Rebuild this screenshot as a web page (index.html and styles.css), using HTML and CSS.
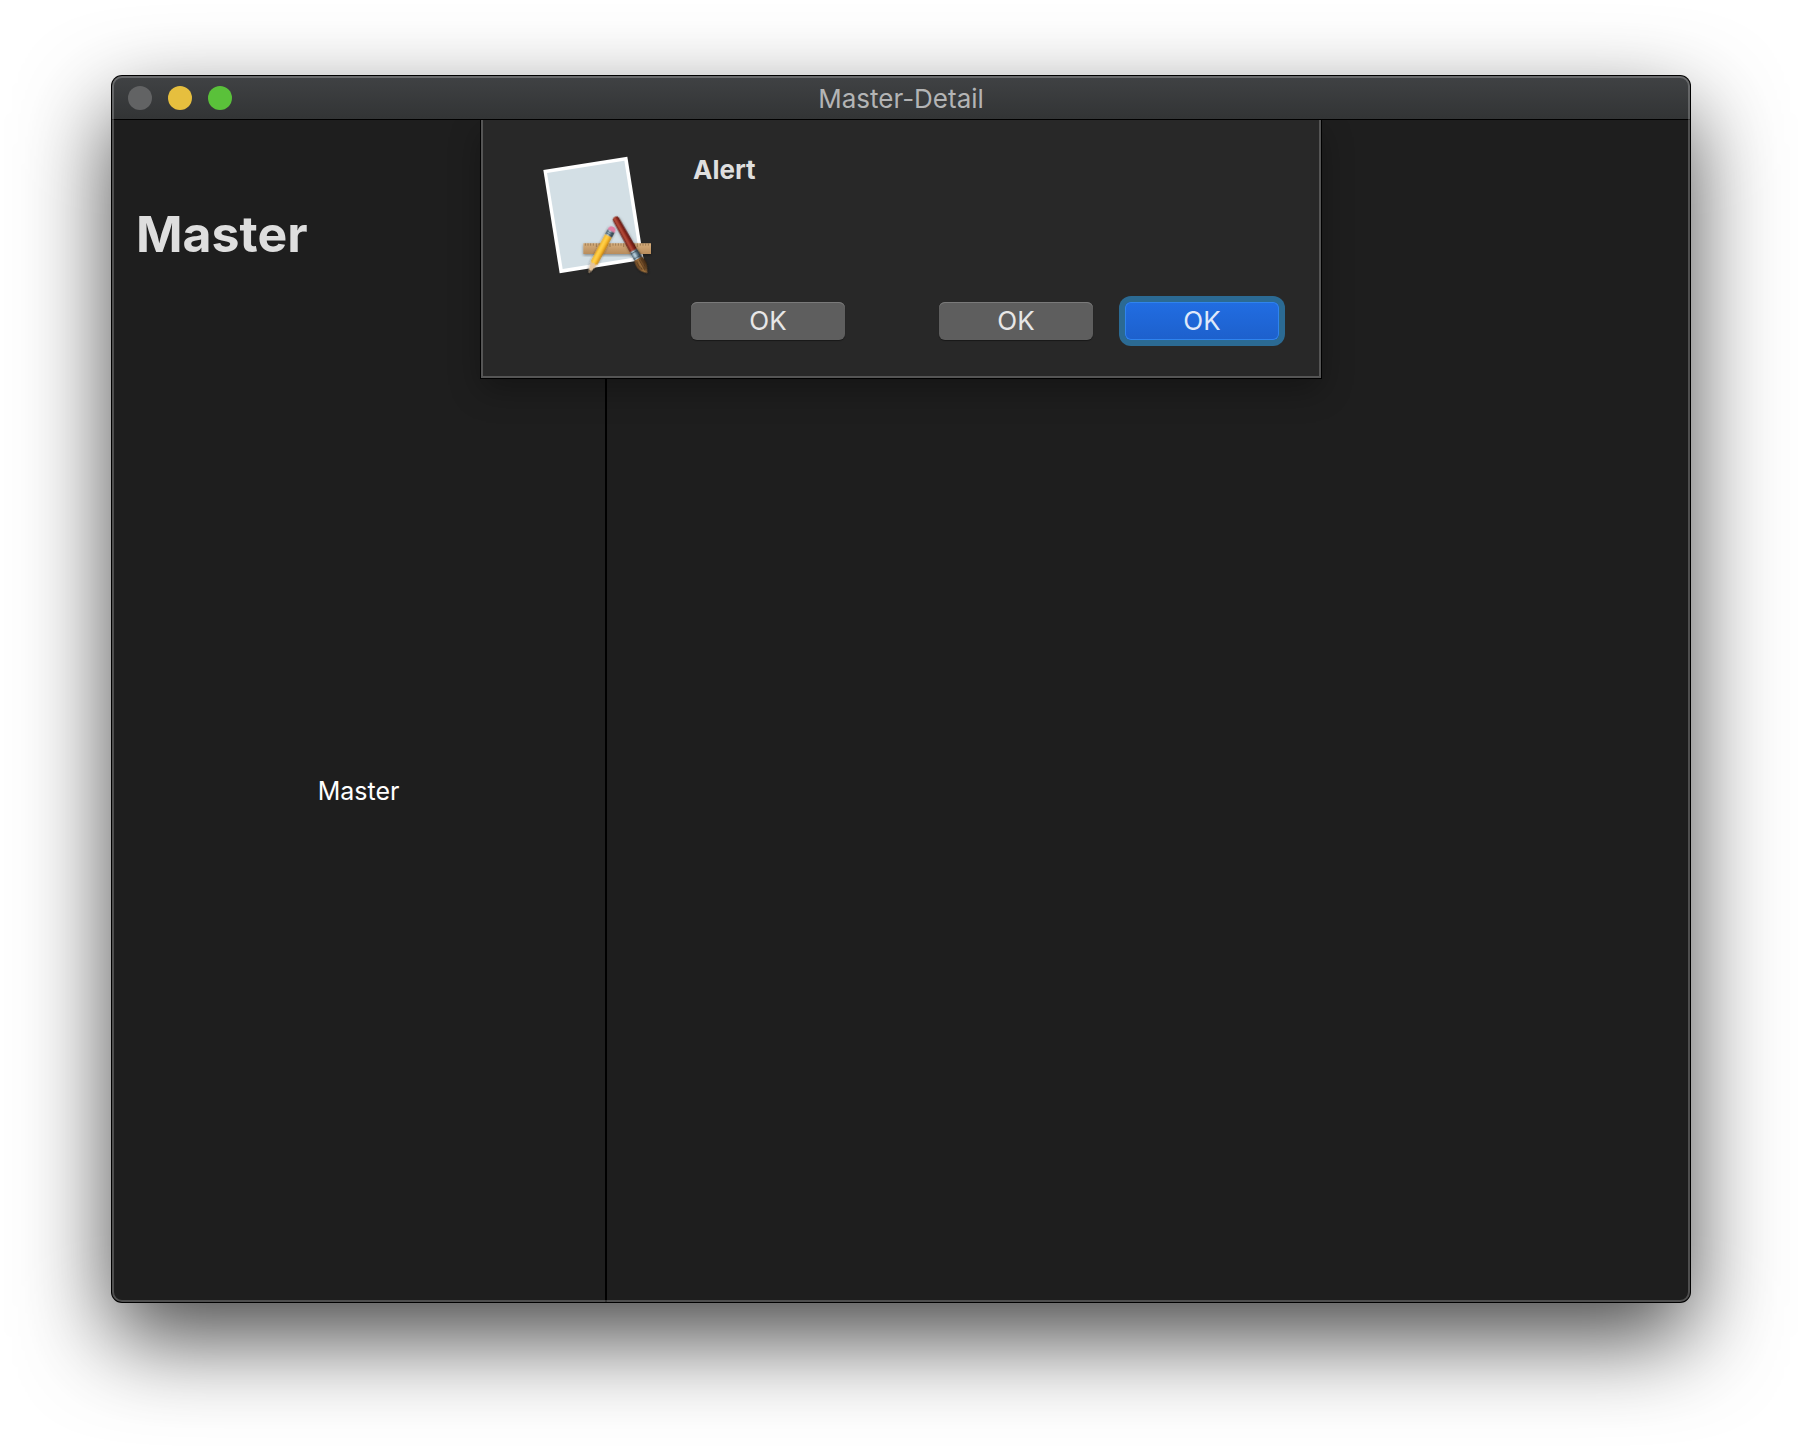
FILE: index.html
```html
<!DOCTYPE html>
<html lang="en">
<head>
<meta charset="utf-8">
<title>Master-Detail</title>
<link rel="stylesheet" href="styles.css">
</head>
<body>
<div class="window">
  <header class="titlebar">
    <div class="controls">
      <button class="light light-close" type="button" aria-label="Close" disabled></button>
      <button class="light light-minimize" type="button" aria-label="Minimize"></button>
      <button class="light light-zoom" type="button" aria-label="Zoom"></button>
    </div>
    <span class="title">Master-Detail</span>
  </header>
  <main class="split">
    <section class="master">
      <h1 class="heading">Master</h1>
      <p class="label">Master</p>
    </section>
    <section class="detail"></section>
    <div class="sheet" role="alertdialog" aria-labelledby="alert-title">
      <svg class="app-icon" viewBox="0 0 450 435" aria-hidden="true">
        <defs>
          <linearGradient id="red" x1="0" x2="1"><stop offset="0" stop-color="#5e160f"/><stop offset=".35" stop-color="#b9503d"/><stop offset=".6" stop-color="#922c20"/><stop offset="1" stop-color="#4c100b"/></linearGradient>
          <linearGradient id="metal" x1="0" x2="1"><stop offset="0" stop-color="#46606f"/><stop offset=".35" stop-color="#c5dce8"/><stop offset=".65" stop-color="#5d7787"/><stop offset="1" stop-color="#20282e"/></linearGradient>
          <linearGradient id="yellow" x1="0" x2="1"><stop offset="0" stop-color="#f6b41f"/><stop offset=".35" stop-color="#ffd34f"/><stop offset=".65" stop-color="#fbbd2d"/><stop offset="1" stop-color="#c78211"/></linearGradient>
          <linearGradient id="wood" x1="0" x2="0" y1="0" y2="1"><stop offset="0" stop-color="#d5ad7b"/><stop offset="1" stop-color="#b88c5c"/></linearGradient>
          <linearGradient id="hair" x1="0" x2="1"><stop offset="0" stop-color="#5e3c1c"/><stop offset=".4" stop-color="#a1733e"/><stop offset="1" stop-color="#3d240f"/></linearGradient>
          <filter id="soft" x="-20%" y="-20%" width="140%" height="140%"><feDropShadow dx="0" dy="4" stdDeviation="4" flood-opacity=".4"/></filter>
        </defs>
        <path d="M73 90 325 50 374 359 122 400Z" fill="#fff"/>
        <path d="M84 99 316 62 362 350 131 387Z" fill="#d3dfe5"/>
        <g filter="url(#soft)">
          <path d="M193 310H396V342H193Z" fill="url(#wood)"/>
          <path d="M199 310v7M207 310v7M215 310v7M223 310v7M232 310v11M241 310v7M249 310v7M257 310v7M265 310v7M273 310v11M282 310v7M290 310v7M298 310v7M306 310v7M314 310v11M323 310v7M331 310v7M339 310v7M347 310v7M355 310v11M364 310v7M372 310v7M380 310v7M388 310v7" stroke="#846342" stroke-width="2"/>
        </g>
        <g filter="url(#soft)" transform="translate(280 266) rotate(28)">
          <path d="M-11 4Q-11-6 0-6 11-6 11 4V9H-11Z" fill="#e47da3"/>
          <path d="M-11 8H11V25H-11Z" fill="url(#metal)"/>
          <path d="M-11 14H11M-11 20H11" stroke="#344a58" stroke-width="2"/>
          <path d="M-11 25H11V116L5 121 0 117-5 121-11 116Z" fill="url(#yellow)"/>
          <path d="M-11 116-5 121 0 117 5 121 11 116 3 146 0 150-3 146Z" fill="#e5c49b"/>
          <path d="M-3 142H3L0 150Z" fill="#40362d"/>
        </g>
        <g filter="url(#soft)" transform="translate(291 238) rotate(-29)">
          <path d="M-10 1Q-10-8 0-8 10-8 10 1L12 107H-11Z" fill="url(#red)"/>
          <path d="M-11 107H12L14 135H-12Z" fill="url(#metal)"/>
          <path d="M-12 113H12M-12 130H13" stroke="#28343d" stroke-width="2"/>
          <path d="M-12 135H14Q21 158 10 174L4 187Q-2 180-9 173-20 157-12 135Z" fill="url(#hair)"/>
          <path d="M-6 140Q-11 155-3 171M2 140V176M8 140Q12 155 5 173" stroke="#432b15" stroke-width="2" fill="none"/>
        </g>
      </svg>
      <div class="sheet-body">
        <h2 class="alert-title" id="alert-title">Alert</h2>
        <div class="actions">
          <button class="button" type="button">OK</button>
          <div class="actions-end">
            <button class="button" type="button">OK</button>
            <button class="button button-default" type="button">OK</button>
          </div>
        </div>
      </div>
    </div>
  </main>
</div>
</body>
</html>
```

FILE: styles.css
```css
* {
  box-sizing: border-box;
}

body {
  margin: 0;
  min-height: 100vh;
  padding: 76px 112px 148px;
  display: flex;
  background: #fff;
  font-family: Inter, "Liberation Sans", sans-serif;
  font-size: 26px;
  line-height: 32px;
}

h1,
h2,
p {
  margin: 0;
}

.window {
  position: relative;
  flex: 1;
  display: flex;
  flex-direction: column;
  border-radius: 10px;
  background: #1e1e1e;
  box-shadow: 0 0 0 1px #000, 0 36px 90px rgba(0, 0, 0, 0.72);
}

.window::after {
  content: "";
  position: absolute;
  inset: 0;
  border-radius: inherit;
  box-shadow: inset 0 0 0 2px rgba(255, 255, 255, 0.22);
  pointer-events: none;
}

.titlebar {
  display: grid;
  grid-template-columns: 1fr auto 1fr;
  align-items: center;
  height: 44px;
  padding: 0 16px;
  border-bottom: 1px solid #000;
  border-radius: 10px 10px 0 0;
  background: linear-gradient(#404244, #323435);
}

.controls {
  display: flex;
  gap: 16px;
}

.light {
  width: 24px;
  height: 24px;
  padding: 0;
  border: 0;
  border-radius: 50%;
}

.light-close {
  background: #626364;
}

.light-minimize {
  background: #e6bf3e;
}

.light-zoom {
  background: #5ac13a;
}

.title {
  padding-top: 2px;
  color: #b3b4b5;
}

.split {
  position: relative;
  flex: 1;
  display: grid;
  grid-template-columns: 495px 1fr;
}

.master {
  display: flex;
  flex-direction: column;
  border-right: 2px solid #000;
}

.heading {
  padding: 82px 24px 14px;
  color: #dedede;
  font-size: 50px;
  line-height: 64px;
  font-weight: 700;
}

.label {
  flex: 1;
  display: flex;
  align-items: center;
  justify-content: center;
  color: #fff;
  font-size: 25px;
}

.sheet {
  position: absolute;
  top: 0;
  left: 0;
  right: 0;
  width: 840px;
  margin: 0 auto;
  padding: 20px 40px 36px 36px;
  display: flex;
  gap: 22px;
  border: 2px solid #555;
  border-top: 0;
  background: #282828;
  box-shadow: 0 0 0 1px #000, 0 12px 30px rgba(0, 0, 0, 0.3);
  clip-path: inset(0 -60px -60px);
}

.app-icon {
  flex: none;
  width: 150px;
  height: 145px;
}

.sheet-body {
  flex: 1;
  display: flex;
  flex-direction: column;
  justify-content: space-between;
  gap: 116px;
  padding-top: 14px;
}

.alert-title {
  padding-left: 2px;
  color: #dfdfdf;
  font-size: 26px;
  font-weight: 700;
}

.actions,
.actions-end {
  display: flex;
  justify-content: space-between;
  gap: 32px;
}

.button {
  width: 154px;
  height: 38px;
  padding: 0;
  border: 0;
  border-radius: 6px;
  background: #5e5e5e;
  box-shadow: inset 0 1px 0 #7a7a7a, 0 1px 1px rgba(0, 0, 0, 0.4);
  color: #e7e7e7;
  font: inherit;
}

.button-default {
  background: linear-gradient(#216de2, #1d60cc);
  box-shadow: inset 0 0 0 1px #2f84ee, 0 0 0 6px #2b6a93;
  color: #dfe9fa;
}
```
